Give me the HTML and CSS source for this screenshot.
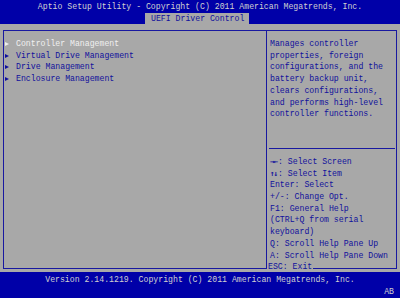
FILE: index.html
```html
<!DOCTYPE html>
<html lang="en">
<head>
    <meta charset="UTF-8">
    <title>Aptio Setup Utility</title>
    <link rel="stylesheet" href="styles.css">
</head>
<body>
<div class="header">
    <div class="title">Aptio Setup Utility - Copyright (C) 2011 American Megatrends, Inc.</div>
    <div class="tabs">
        <span class="tab">UEFI Driver Control</span>
    </div>
</div>
<div class="screen">
    <div class="box">
        <ul class="menu">
            <li class="selected"><span class="arrow"></span>Controller Management</li>
            <li><span class="arrow"></span>Virtual Drive Management</li>
            <li><span class="arrow"></span>Drive Management</li>
            <li><span class="arrow"></span>Enclosure Management</li>
        </ul>
        <div class="side">
            <div class="help">
                Manages controller<br>
                properties, foreign<br>
                configurations, and the<br>
                battery backup unit,<br>
                clears configurations,<br>
                and performs high-level<br>
                controller functions.
            </div>
            <div class="divider"></div>
            <div class="keys">
                <div><span class="sym">&#8594;&#8592;</span>: Select Screen</div>
                <div><span class="sym">&#8593;&#8595;</span>: Select Item</div>
                <div>Enter: Select</div>
                <div>+/-: Change Opt.</div>
                <div>F1: General Help</div>
                <div>(CTRL+Q from serial</div>
                <div>keyboard)</div>
                <div>Q: Scroll Help Pane Up</div>
                <div>A: Scroll Help Pane Down</div>
                <div><span class="esc">ESC: Exit</span></div>
            </div>
        </div>
    </div>
</div>
<div class="footer">
    <div class="version">Version 2.14.1219. Copyright (C) 2011 American Megatrends, Inc.</div>
    <div class="code">AB</div>
</div>
</body>
</html>
```

FILE: styles.css
```css
body {
    margin: 0;
    width: 400px;
    height: 298px;
    overflow: hidden;
    background-color: #0000a8;
    font-family: "Liberation Mono", "DejaVu Sans Mono", monospace;
    font-size: 8.2px;
    color: #10109c;
}
.header {
    height: 24px;
}
.title {
    height: 13px;
    line-height: 14px;
    text-align: center;
    color: #d0d0d0;
}
.tabs {
    height: 11px;
    padding-left: 145px;
}
.tab {
    display: inline-block;
    width: 104px;
    height: 11px;
    line-height: 12px;
    padding-left: 6px;
    box-sizing: border-box;
    background-color: #a8a8a8;
    color: #10109c;
}
.screen {
    height: 248px;
    padding: 6px 3px 3px 3px;
    box-sizing: border-box;
    background-color: #a8a8a8;
}
.box {
    display: flex;
    height: 239px;
    border: 1px solid #1818a0;
    box-sizing: border-box;
}
.menu {
    list-style: none;
    margin: 0;
    padding: 7px 0 0 1px;
    width: 263px;
    box-sizing: border-box;
    border-right: 1px solid #1818a0;
    line-height: 11.7px;
}
.menu li {
    display: flex;
    align-items: center;
}
.arrow {
    width: 0;
    height: 0;
    border-top: 2.5px solid transparent;
    border-bottom: 2.5px solid transparent;
    border-left: 4px solid #10109c;
    margin-right: 7px;
}
.selected {
    color: #f0f0f0;
}
.selected .arrow {
    border-left-color: #f0f0f0;
}
.side {
    flex: 1;
    display: flex;
    flex-direction: column;
    padding: 7px 0 0 3px;
    line-height: 11.7px;
}
.divider {
    margin-top: auto;
    margin-left: -1px;
    margin-bottom: 7px;
    margin-right: 1px;
    border-top: 1px solid #1818a0;
}
.keys {
    margin-bottom: -5px;
}
.sym {
    font-family: "DejaVu Sans Mono", monospace;
    font-weight: bold;
    font-size: 7.5px;
    letter-spacing: -1px;
    margin-right: 1px;
}
.esc {
    background-color: #a8a8a8;
    margin-left: -3px;
    padding: 0 1px;
}
.footer {
    height: 26px;
    padding-top: 2px;
    box-sizing: border-box;
    color: #d0d0d0;
}
.version {
    line-height: 12px;
    text-align: center;
}
.code {
    line-height: 12px;
    text-align: right;
    padding-right: 6px;
}
```
